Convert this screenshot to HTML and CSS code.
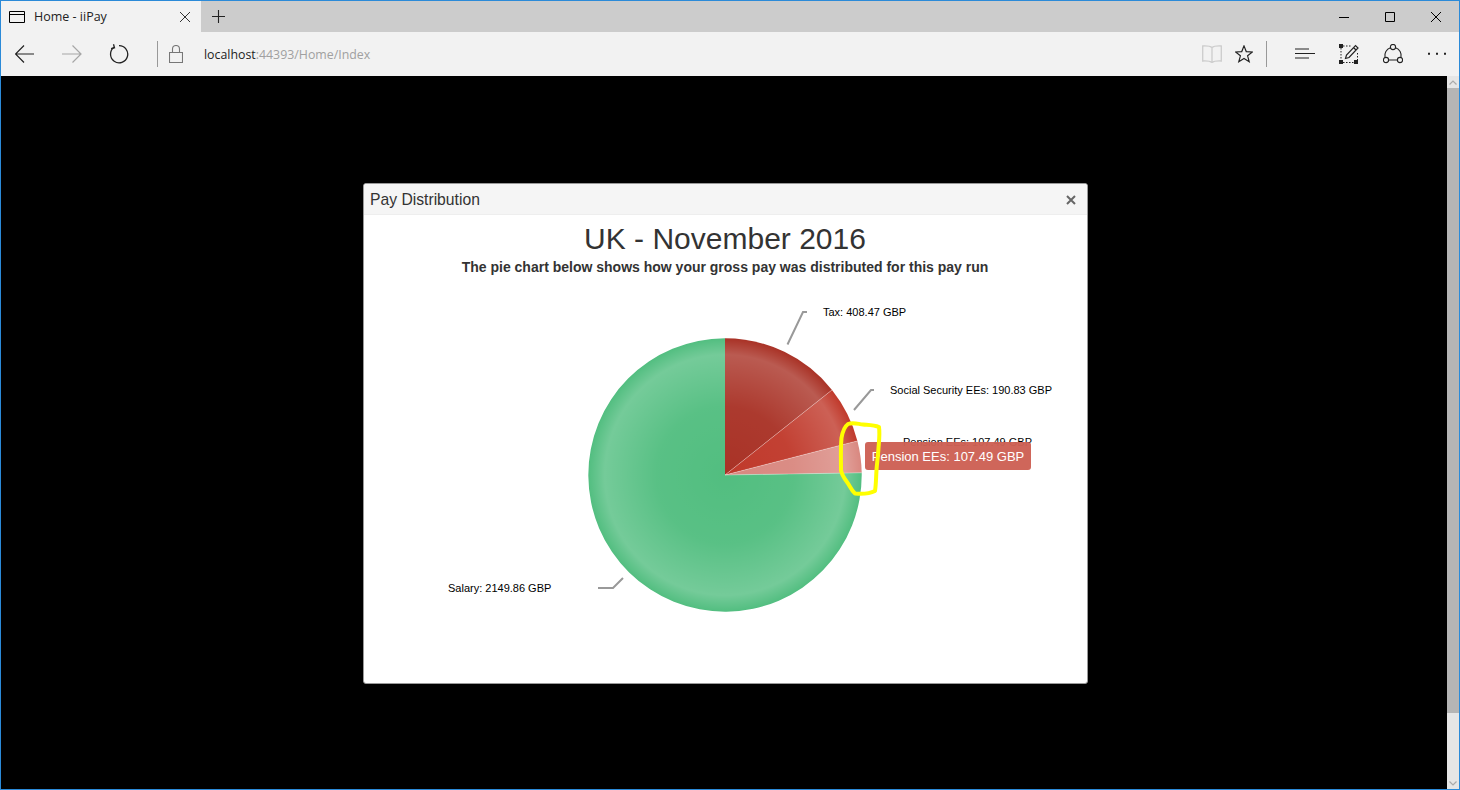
FILE: index.html
```html
<!DOCTYPE html>
<html lang="en">
<head>
  <meta charset="UTF-8">
  <title>Home - iiPay</title>
  <link rel="stylesheet" href="styles.css">
</head>
<body>
  <div class="window">

    <!-- Tab strip -->
    <div class="tabstrip">
      <div class="tab">
        <svg class="tab-icon" width="16" height="14" viewBox="0 0 16 14"><path d="M.5 1.5h15v11H.5zM.5 4.5h15" fill="none" stroke="#000"/></svg>
        <span class="tab-title">Home - iiPay</span>
        <svg class="tab-close" width="12" height="12" viewBox="0 0 12 12"><path d="M1 1l10 10M11 1L1 11" stroke="#333" fill="none"/></svg>
      </div>
      <svg class="tab-new" width="13" height="13" viewBox="0 0 13 13"><path d="M6.500 0v13M0 6.500h13" stroke="#222" stroke-width="1.100" fill="none"/></svg>
      <div class="window-controls">
        <div class="window-btn"><svg width="12" height="12" viewBox="0 0 12 12"><path d="M1 6.500h10" stroke="#000" fill="none"/></svg></div>
        <div class="window-btn"><svg width="12" height="12" viewBox="0 0 12 12"><path d="M1.500 1.500h9v9h-9z" stroke="#000" fill="none"/></svg></div>
        <div class="window-btn"><svg width="12" height="12" viewBox="0 0 12 12"><path d="M1 1l10 10M11 1L1 11" stroke="#000" fill="none"/></svg></div>
      </div>
    </div>

    <!-- Address bar -->
    <div class="toolbar">
      <div class="tool-btn">
        <svg width="20" height="20" viewBox="0 0 20 20"><path d="M19 10H.5M9 1.500L.5 10 9 18.500" fill="none" stroke="#222" stroke-width="1.200"/></svg>
      </div>
      <div class="tool-btn">
        <svg width="20" height="20" viewBox="0 0 20 20"><path d="M0 10h19M10.500 1.500L19 10l-8.500 8.500" fill="none" stroke="#a6a6a6" stroke-width="1.200"/></svg>
      </div>
      <div class="tool-btn">
        <svg width="20" height="20" viewBox="0 0 20 20"><path d="M5 3.300A8.600 8.600 0 1 0 10 1.600" fill="none" stroke="#222" stroke-width="1.300"/><path d="M4.500 .3l1 3.400-3.400 1" fill="none" stroke="#222" stroke-width="1.300"/></svg>
      </div>
      <div class="tool-sep"></div>
      <svg class="lock" width="14" height="18" viewBox="0 0 14 18"><path d="M.5 7.500h13v10H.5zM3.500 7.500V4a3.500 3.500 0 0 1 7 0v3.500" fill="none" stroke="#777" stroke-width="1.100"/></svg>
      <div class="address"><span class="address-host">localhost</span>:44393/Home/Index</div>
      <div class="tool-right">
        <svg class="tool-book" width="20" height="18" viewBox="0 0 20 18"><path d="M10 2.500C8 1 4 .8.7 1v15c3.300-.2 7.300 0 9.300 1.500 2-1.500 6-1.700 9.300-1.500V1C16 .8 12 1 10 2.500zM10 2.500V17" fill="none" stroke="#ccc" stroke-width="1.300"/></svg>
        <svg class="tool-star" width="18" height="18" viewBox="0 0 20 20"><path d="M10 1l2.500 6.300 6.800.4-5.300 4.300 1.800 6.600L10 15l-5.800 3.600L6 12 .7 7.700l6.800-.4z" fill="none" stroke="#222" stroke-width="1.300"/></svg>
        <div class="tool-sep tool-sep-right"></div>
        <div class="tool-btn">
          <svg width="20" height="12" viewBox="0 0 20 12"><path d="M0 1h14M0 5.500h20M0 10h14" fill="none" stroke="#222" stroke-width="1.200"/></svg>
        </div>
        <div class="tool-btn">
          <svg width="20" height="20" viewBox="0 0 20 20"><path d="M2 4v13M4 18.500h13M18.500 9v7M4 2h8" fill="none" stroke="#222" stroke-dasharray="1.500 1.500"/><path d="M0 0h4v4H0zM0 16h4v4H0zM15 16h4v4h-4z" fill="#222"/><path d="M6.500 14.500l1-3.500L16.500 1.500l2.500 2.500-9 9.500zM14.500 3.500l2.500 2.500" fill="none" stroke="#222" stroke-width="1.200"/></svg>
        </div>
        <div class="tool-btn">
          <svg width="20" height="20" viewBox="0 0 20 20"><circle cx="10" cy="3" r="2.600" fill="none" stroke="#222" stroke-width="1.100"/><circle cx="3" cy="16" r="2.600" fill="none" stroke="#222" stroke-width="1.100"/><circle cx="17" cy="16" r="2.600" fill="none" stroke="#222" stroke-width="1.100"/><path d="M5.600 16h8.800M12.500 3.800A8.300 8.300 0 0 1 18 13.500M7.500 3.800A8.300 8.300 0 0 0 2 13.500" fill="none" stroke="#222" stroke-width="1.100"/></svg>
        </div>
        <div class="tool-btn">
          <svg width="20" height="4" viewBox="0 0 20 4"><path d="M1 .8h2v2H1zM9 .8h2v2H9zM17 .8h2v2h-2z" fill="#222"/></svg>
        </div>
      </div>
    </div>

    <!-- Page -->
    <div class="viewport">
      <div class="page">
        <div class="modal">
          <div class="modal-header">
            <span class="modal-title">Pay Distribution</span>
            <svg class="modal-close" width="10" height="10" viewBox="0 0 10 10"><path d="M1 1l8 8M9 1L1 9" stroke="#666" stroke-width="2" fill="none"/></svg>
          </div>
          <div class="modal-body">
            <h1 class="chart-title">UK - November 2016</h1>
            <p class="chart-subtitle">The pie chart below shows how your gross pay was distributed for this pay run</p>
            <div class="chart">
              <svg class="chart-pie" width="723" height="398" viewBox="364 285 723 398">
                <defs>
                  <radialGradient id="gloss" gradientUnits="userSpaceOnUse" cx="725" cy="475" r="136.700">
                    <stop offset="0" stop-color="#fff" stop-opacity="0"/>
                    <stop offset="0.5" stop-color="#fff" stop-opacity="0.04"/>
                    <stop offset="0.88" stop-color="#fff" stop-opacity="0.2"/>
                    <stop offset="1" stop-color="#fff" stop-opacity="0"/>
                  </radialGradient>
                </defs>
                <path d="M725 475L725 338.300A136.700 136.700 0 0 1 832 389.900Z" fill="#a93226"/>
                <path d="M725 475L832 389.900A136.700 136.700 0 0 1 857.400 440.900Z" fill="#c0392b"/>
                <path d="M725 475L857.400 440.900A136.700 136.700 0 0 1 861.700 472.800Z" fill="#d98880"/>
                <path d="M725 475L861.700 472.800A136.700 136.700 0 1 1 725 338.300Z" fill="#52be80"/>
                <circle cx="725" cy="475" r="136.700" fill="url(#gloss)"/>
                <path d="M725 475L832 389.900M725 475L857.400 440.900M725 475L861.700 472.800" stroke="#fff" stroke-opacity="0.3" fill="none"/>

                <path class="leader" d="M787.500 344.500L803 312H807"/>
                <path class="leader" d="M854 410L871 390H874"/>
                <path class="leader" d="M623 578L613 588H598"/>

                <text class="slice-label" x="823" y="316">Tax: 408.47 GBP</text>
                <text class="slice-label" x="890" y="394">Social Security EEs: 190.83 GBP</text>
                <text class="slice-label" x="903" y="446">Pension EEs: 107.49 GBP</text>
                <text class="slice-label" x="448" y="592">Salary: 2149.86 GBP</text>
              </svg>
              <div class="chart-tip">Pension EEs: 107.49 GBP</div>
              <svg class="chart-mark" width="723" height="398" viewBox="364 285 723 398">
                <path d="M848 424C853 422 858 424 863 424.500C868 425 874 425 879 427C880 434 879 441 878.500 448C878 456 877 463 876.500 470C876 478 876 485 875 491C870 493.500 861 494 855 493.500C851 490 850 486 847 482C844 478 841.500 474 841 470C841 460 840.500 448 841.500 438C842.500 432 844 427 848 424Z" fill="none" stroke="#ffff00" stroke-width="4" stroke-linejoin="round"/>
              </svg>
            </div>
          </div>
        </div>
      </div>
      <div class="scrollbar">
        <div class="scroll-btn"><svg width="8" height="5" viewBox="0 0 8 5"><path d="M.5 4.500L4 1l3.500 3.500" fill="none" stroke="#aaa" stroke-width="1.200"/></svg></div>
        <div class="scroll-thumb"></div>
        <div class="scroll-track"></div>
        <div class="scroll-btn"><svg width="8" height="5" viewBox="0 0 8 5"><path d="M.5 .5L4 4l3.500-3.500" fill="none" stroke="#aaa" stroke-width="1.200"/></svg></div>
      </div>
    </div>
  </div>
</body>
</html>
```
FILE: styles.css
```css
* {
  box-sizing: border-box;
}
body {
  margin: 0;
  padding: 0;
  overflow: hidden;
  font-family: "Liberation Sans", Arial, sans-serif;
}
svg {
  display: block;
}
.window {
  display: flex;
  flex-direction: column;
  height: 790px;
  border: 1px solid #2b8ad8;
  background: #000;
}

/* tab strip */
.tabstrip {
  display: flex;
  align-items: center;
  height: 31px;
  background: #cccccc;
}
.tab {
  display: flex;
  align-items: center;
  width: 200px;
  height: 31px;
  padding: 0 10px 0 8px;
  background: #f2f2f2;
}
.tab-title {
  flex: 1;
  margin-left: 9px;
  font-family: "Open Sans", sans-serif;
  font-size: 12.500px;
  color: #222;
}
.tab-new {
  margin-left: 11px;
}
.window-controls {
  display: flex;
  margin-left: auto;
}
.window-btn {
  display: flex;
  align-items: center;
  justify-content: center;
  width: 46px;
  height: 31px;
}

/* address bar */
.toolbar {
  display: flex;
  align-items: center;
  height: 44px;
  background: #f2f2f2;
}
.tool-btn {
  display: flex;
  align-items: center;
  justify-content: center;
  width: 47px;
  height: 44px;
}
.tool-sep {
  width: 1px;
  height: 26px;
  margin-left: 15px;
  background: #999;
}
.lock {
  margin-left: 11px;
}
.address {
  margin-left: 21px;
  font-family: "Open Sans", sans-serif;
  font-size: 12.350px;
  color: #a0a0a0;
}
.address-host {
  color: #222;
}
.tool-right {
  display: flex;
  align-items: center;
  margin-left: auto;
}
.tool-right .tool-btn {
  width: 44px;
}
.tool-book {
  margin-right: 13px;
}
.tool-star {
  margin-right: 12px;
}
.tool-sep-right {
  margin: 0 16px 0 1px;
}

/* page */
.viewport {
  display: flex;
  flex: 1;
  min-height: 0;
}
.page {
  flex: 1;
  padding: 107px 0 0 3px;
  background: #000;
}
.modal {
  width: 725px;
  height: 501px;
  margin: 0 auto;
  border: 1px solid #999;
  border-radius: 3px;
  background: #fff;
  overflow: hidden;
}
.modal-header {
  display: flex;
  align-items: center;
  justify-content: space-between;
  height: 31px;
  padding: 2px 11px 0 6px;
  background: #f5f5f5;
  border-bottom: 1px solid #eee;
}
.modal-title {
  font-size: 15.700px;
  color: #333;
}
.chart-title {
  margin: 0;
  padding-top: 6px;
  padding-right: 1px;
  font-size: 30px;
  font-weight: normal;
  line-height: 36px;
  text-align: center;
  color: #333;
}
.chart-subtitle {
  margin: 0;
  height: 28px;
  padding: 2px 1px 0 0;
  font-size: 14px;
  font-weight: bold;
  line-height: 17px;
  text-align: center;
  color: #333;
}
.chart {
  position: relative;
  height: 398px;
}
.leader {
  fill: none;
  stroke: #999;
  stroke-width: 2;
}
.slice-label {
  font-size: 11px;
  fill: #000;
}
.chart-tip {
  position: absolute;
  left: 501px;
  top: 157px;
  width: 166px;
  height: 28px;
  border-radius: 3px;
  background: rgba(205, 97, 85, 0.97);
  font-size: 13px;
  line-height: 29px;
  text-align: center;
  color: #fff;
}
.chart-mark {
  position: absolute;
  left: 0;
  top: 0;
}

/* scrollbar */
.scrollbar {
  display: flex;
  flex-direction: column;
  width: 12px;
  background: #e6e6e6;
}
.scroll-btn {
  display: flex;
  align-items: center;
  justify-content: center;
  height: 12px;
}
.scroll-thumb {
  height: 625px;
  background: #b5b5b5;
}
.scroll-track {
  flex: 1;
}
```
